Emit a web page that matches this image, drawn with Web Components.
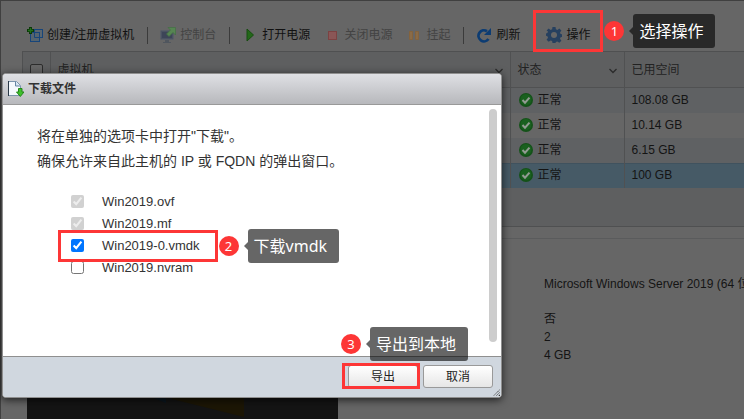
<!DOCTYPE html>
<html lang="zh-CN">
<head>
<meta charset="utf-8">
<title>虚拟机</title>
<style>
html, body { margin: 0; height: 100%; }
body {
  font: 12px/18px "Liberation Sans", "Noto Sans CJK SC", sans-serif;
  color: #141414;
  background: #666;
  overflow: hidden;
}
</style>
</head>
<body>
<vm-page></vm-page>
<script>
const define = (name, html, setup) => {
  const template = document.createElement('template');
  template.innerHTML = html;
  customElements.define(name, class extends HTMLElement {
    constructor() {
      super();
      this.attachShadow({ mode: 'open' }).append(template.content.cloneNode(true));
    }
    connectedCallback() {
      if (setup) setup(this, this.shadowRoot);
    }
  });
};

const icons = {
  create: `<rect x="7.500" y="2.500" width="8" height="8" fill="#5a6670" stroke="#17457a"/><rect x="3.500" y="5.500" width="9" height="9" fill="#55646f" stroke="#17457a"/><path d="M7.500 5.500v5h5" fill="none" stroke="#17457a"/><path d="M3.500 0v7M0 3.500h7" stroke="#0a3808" stroke-width="3"/><path d="M3.500 1v5M1 3.500h5" stroke="#22701a" stroke-width="1.300"/>`,
  console: `<rect x="0.500" y="3.500" width="13" height="9" rx="1" fill="#4a5262" stroke="#585e68"/><rect x="2" y="5" width="10" height="6" fill="#3d4558"/><path d="M5 13h4v2h2v1H3v-1h2z" fill="#50565e"/><path d="M8 0.500h7.500V8l-2.500-2.500L9 9.500 6.500 7 10.500 3z" fill="#568552" stroke="#447044" stroke-width=".7"/>`,
  play: `<path d="M5 2v12l6.500-6z" fill="#236819" stroke="#174d10"/>`,
  stop: `<rect x="4.500" y="4.500" width="8" height="8" fill="#8a5656" stroke="#7c4242"/>`,
  pause: `<path d="M3.500 4.500h3v8h-3zM9.500 4.500h3v8h-3z" fill="#8a6b47" stroke="#84633d"/>`,
  refresh: `<path d="M12.500 12A5.500 5.500 0 1 1 11 4.200" fill="none" stroke="#0c3c73" stroke-width="2.800"/><path d="M15 1v7H8z" fill="#0c3c73"/>`,
  gear: `<path d="M6.500 0h3l.4 2.300 1.500.6 1.900-1.400 2.100 2.100-1.400 1.900.6 1.500 1.900.4v2.400l-1.900.5-.6 1.500 1.400 1.900-2.100 2.100-1.900-1.400-1.500.6L9.500 16h-3l-.4-2-1.500-.6-1.900 1.400L.6 12.700 2 10.800l-.6-1.500L0 8.800V6.400L1.400 6 2 4.500.6 3.600l2.100-2.100 1.900 1.400 1.500-.6z" fill="#26405f"/><circle cx="8" cy="8" r="3" fill="#666"/>`,
  ok: `<circle cx="8" cy="8" r="7" fill="#145219"/><circle cx="8" cy="7.500" r="5.500" fill="#19601f"/><path d="M4.500 8l2.500 2.700 4.500-5" fill="none" stroke="#929b92" stroke-width="2"/>`,
  chevron: `<path d="M4.500 7l3.500 3.500L11.500 7" fill="none" stroke="#2b2b2b" stroke-width="1.300"/>`,
  download: `<path d="M.5.500h8l4 4v10H.5z" fill="#f4f9fd" stroke="#7c96ae"/><path d="M.5 0v15" stroke="#2b3947"/><path d="M7.500 .5V5H12" fill="#d3e4f2" stroke="#6686a4"/><path d="M10.500 7.500h3.500v3.500h2L12.300 15.500 8.500 11h2z" fill="#3fc02c" stroke="#23861a"/>`,
  grip: `<path d="M7.500 1L1 7.500M7.500 4L4 7.500" stroke="#333" stroke-dasharray="1.500 .5"/><path d="M6 8h2V6z" fill="#333"/>`
};

define('ui-icon', `
<style>
:host { display: block; flex: none; width: 16px; height: 16px; }
svg { display: block; width: 100%; height: 100%; }
</style><svg viewBox="0 0 16 16" aria-hidden="true"></svg>`, (el, root) => {
  const svg = root.querySelector('svg');
  if (el.getAttribute('name') === 'grip') svg.setAttribute('viewBox', '0 0 8 8');
  svg.innerHTML = icons[el.getAttribute('name')];
});

define('tool-button', `
<style>
:host { display: block; }
button {
  display: flex; align-items: center; gap: 4px;
  height: 24px; padding: 0 6px; border: 0; background: none;
  font: inherit; color: #111; white-space: nowrap;
}
button:disabled { color: #434343; }
</style><button type="button"><ui-icon></ui-icon><span><slot></slot></span></button>`, (el, root) => {
  root.querySelector('ui-icon').replaceWith(Object.assign(document.createElement('template'), {
    innerHTML: `<ui-icon name="${el.getAttribute('icon')}"></ui-icon>`
  }).content);
  root.querySelector('button').disabled = el.hasAttribute('disabled');
});

/* Wraps a control with a red frame, a step number and a tip. */
define('step-mark', `
<style>
:host { display: block; position: relative; }
.ring {
  position: absolute; inset: var(--ring, -4px); z-index: 2;
  border: 3px solid #fd3636; pointer-events: none;
}
.note {
  position: absolute; left: calc(100% + 4px); top: 50%; transform: translateY(-50%);
  display: flex; align-items: center; gap: 9px;
  font-family: "Noto Sans", "Noto Sans CJK SC", sans-serif; color: #fff;
}
:host([above]) .note { left: -4px; top: auto; bottom: calc(100% + 5px); transform: none; }
.num {
  width: 20px; height: 20px; border-radius: 50%; background: #fd3636;
  font-size: 13px; line-height: 20px; text-align: center;
}
.tip {
  position: relative; padding: 0 12px 0 6px; border-radius: 3px;
  background: rgba(0, 0, 0, .6); font-size: 16px; line-height: 34px; white-space: nowrap;
}
.tip::before {
  content: ""; position: absolute; right: 100%; top: 13px;
  border: 4px solid transparent; border-left: 0; border-right-color: rgba(0, 0, 0, .6);
}
</style>
<slot></slot>
<div class="ring"><div class="note"><span class="num"></span><span class="tip"></span></div></div>`, (el, root) => {
  root.querySelector('.num').textContent = el.getAttribute('step');
  root.querySelector('.tip').textContent = el.getAttribute('tip');
});

define('vm-toolbar', `
<style>
:host { display: flex; align-items: center; gap: 2px; padding: 23px 0 4px 21px; }
i { flex: none; width: 1px; height: 17px; margin: 0 4px 0 5px; background: #3b3b3b; }
step-mark { --ring: -13px -7px -5px -7px; }
.last { margin-left: 12px; }
</style>
<tool-button icon="create">创建/注册虚拟机</tool-button><i></i>
<tool-button icon="console" disabled>控制台</tool-button><i></i>
<tool-button icon="play">打开电源</tool-button>
<tool-button icon="stop" disabled>关闭电源</tool-button>
<tool-button icon="pause" disabled>挂起</tool-button><i></i>
<tool-button icon="refresh">刷新</tool-button>
<step-mark class="last" step="1" tip="选择操作"><tool-button icon="gear">操作</tool-button></step-mark>`);

define('vm-grid', `
<style>
:host {
  display: block; margin-left: 22px; min-height: 174px;
  border: 1px solid #4f5051; border-right: 0; background: #5e5f60;
}
table { width: 100%; table-layout: fixed; border-collapse: collapse; }
col.check { width: 27px; } col.name { width: 460px; } col.state { width: 114px; }
th, td { padding: 0 7px; text-align: left; font-weight: normal; border-right: 1px solid #505152; }
th:last-child, td:last-child { border-right: 0; }
th { height: 35px; padding-top: 2px; box-sizing: border-box; border-bottom: 1px solid #505152; color: #222; }
td { height: 25px; }
tr:nth-child(odd) td { background: #5f6163; }
tr:nth-child(even) td { background: #666; }
tr.on td { background: #465a66; box-shadow: inset 0 1px #40525e; }
div { display: flex; align-items: center; justify-content: space-between; }
td div { justify-content: flex-start; gap: 4px; }
input { display: block; appearance: none; width: 13px; height: 13px; margin: 0; border: 1px solid #2c2c2c; border-radius: 2px; background: #666; }
th ui-icon { margin-right: -4px; }
</style>
<table>
<colgroup><col class="check"><col class="name"><col class="state"><col></colgroup>
<thead><tr><th><input type="checkbox" aria-label="全选"></th>
<th><div>虚拟机<ui-icon name="chevron"></ui-icon></div></th>
<th><div>状态<ui-icon name="chevron"></ui-icon></div></th><th>已用空间</th></tr></thead>
<tbody></tbody>
</table>`, (el, root) => {
  root.querySelector('tbody').innerHTML = ['108.08 GB', '10.14 GB', '6.15 GB', '100 GB'].map((size, i) =>
    `<tr${i === 3 ? ' class="on"' : ''}><td></td><td></td><td><div><ui-icon name="ok"></ui-icon>正常</div></td><td>${size}</td></tr>`).join('');
});

define('vm-details', `
<style>
:host {
  display: flex; flex: 1; gap: 206px; margin: 11px 0 0 22px; padding-left: 5px;
  border-top: 1px solid #5a5b5c; overflow: hidden;
}
svg { flex: none; width: 311px; height: 220px; margin-top: 12px; background: #141414; }
ul { list-style: none; margin: 0; padding: 36px 0 0; white-space: nowrap; }
li:first-child { margin-bottom: 17px; }
</style>
<svg viewBox="0 0 311 220" aria-hidden="true"><path d="M110 140l29-9v21z" fill="#0b1720"/><path d="M145 130h72v36l-72-18z" fill="#1c1605"/></svg>
<ul><li>Microsoft Windows Server 2019 (64 位)</li><li>否</li><li>2</li><li>4 GB</li></ul>`);

define('file-option', `
<style>
:host { display: flex; align-items: center; height: 22px; }
input { width: 13px; height: 13px; margin: 0 18px 2px 0; }
label { font-size: 13px; color: #333; }
</style><input type="checkbox" id="file"><label for="file"><slot></slot></label>`, (el, root) => {
  const box = root.querySelector('input');
  box.checked = el.hasAttribute('checked');
  box.disabled = el.hasAttribute('disabled');
});

define('dialog-button', `
<style>
:host { display: block; }
button {
  display: block; width: 70px; height: 23px; padding: 0; border: 1px solid #999; border-radius: 3px;
  background: linear-gradient(#fff, #e6e6e6); font: inherit; color: #222;
}
</style><button type="button"><slot></slot></button>`);

define('download-dialog', `
<style>
:host {
  display: flex; flex-direction: column; box-sizing: border-box;
  border: 1px solid #8f8f8f; border-radius: 4px; background: #fff;
  box-shadow: 0 2px 8px rgba(0, 0, 0, .7);
}
header {
  display: flex; align-items: center; gap: 4px; height: 30px; padding: 0 5px;
  border-bottom: 1px solid #999; border-radius: 3px 3px 0 0;
  background: linear-gradient(#dfe0e4, #b7b8bc);
}
h1 { margin: 0; font-size: 12px; line-height: 18px; color: #333; }
main { display: flex; justify-content: space-between; flex: 1; min-height: 251px; }
.text { padding: 19px 0 0 34px; }
p { margin: 0; font-size: 14px; line-height: 25px; color: #333; }
.files { display: flex; flex-direction: column; align-items: flex-start; padding: 17px 0 0 34px; }
.files step-mark { --ring: -5px -18px -5px -13px; }
.thumb { width: 8px; margin: 4px 4px 14px 0; border-radius: 4px; background: #cdcdcd; }
footer {
  position: relative; display: flex; justify-content: flex-end; gap: 5px; padding: 8px 8px 9px;
  border-top: 1px solid #8f8f8f; border-radius: 0 0 3px 3px; background: #d0d7df;
}
footer step-mark { --ring: -2px -2px -1px -6px; }
.grip { position: absolute; right: 1px; bottom: 1px; width: 7px; height: 7px; }
</style>
<header><ui-icon name="download"></ui-icon><h1>下载文件</h1></header>
<main>
<div class="text">
<p>将在单独的选项卡中打开"下载"。</p>
<p>确保允许来自此主机的 IP 或 FQDN 的弹出窗口。</p>
<div class="files">
<file-option checked disabled>Win2019.ovf</file-option>
<file-option checked disabled>Win2019.mf</file-option>
<step-mark step="2" tip="下载vmdk"><file-option checked>Win2019-0.vmdk</file-option></step-mark>
<file-option>Win2019.nvram</file-option>
</div>
</div>
<div class="thumb"></div>
</main>
<footer>
<step-mark above step="3" tip="导出到本地"><dialog-button>导出</dialog-button></step-mark>
<dialog-button>取消</dialog-button>
<ui-icon class="grip" name="grip"></ui-icon>
</footer>`);

define('vm-page', `
<style>
:host {
  display: flex; flex-direction: column; position: relative; box-sizing: border-box;
  height: 100vh; overflow: hidden;
  box-shadow: inset 1px 1px #404040;
}
download-dialog { position: absolute; left: 2px; top: 73px; width: 500px; max-width: calc(100% - 4px); }
</style>
<vm-toolbar></vm-toolbar>
<vm-grid></vm-grid>
<vm-details></vm-details>
<download-dialog role="dialog" aria-label="下载文件"></download-dialog>`);
</script>
</body>
</html>
